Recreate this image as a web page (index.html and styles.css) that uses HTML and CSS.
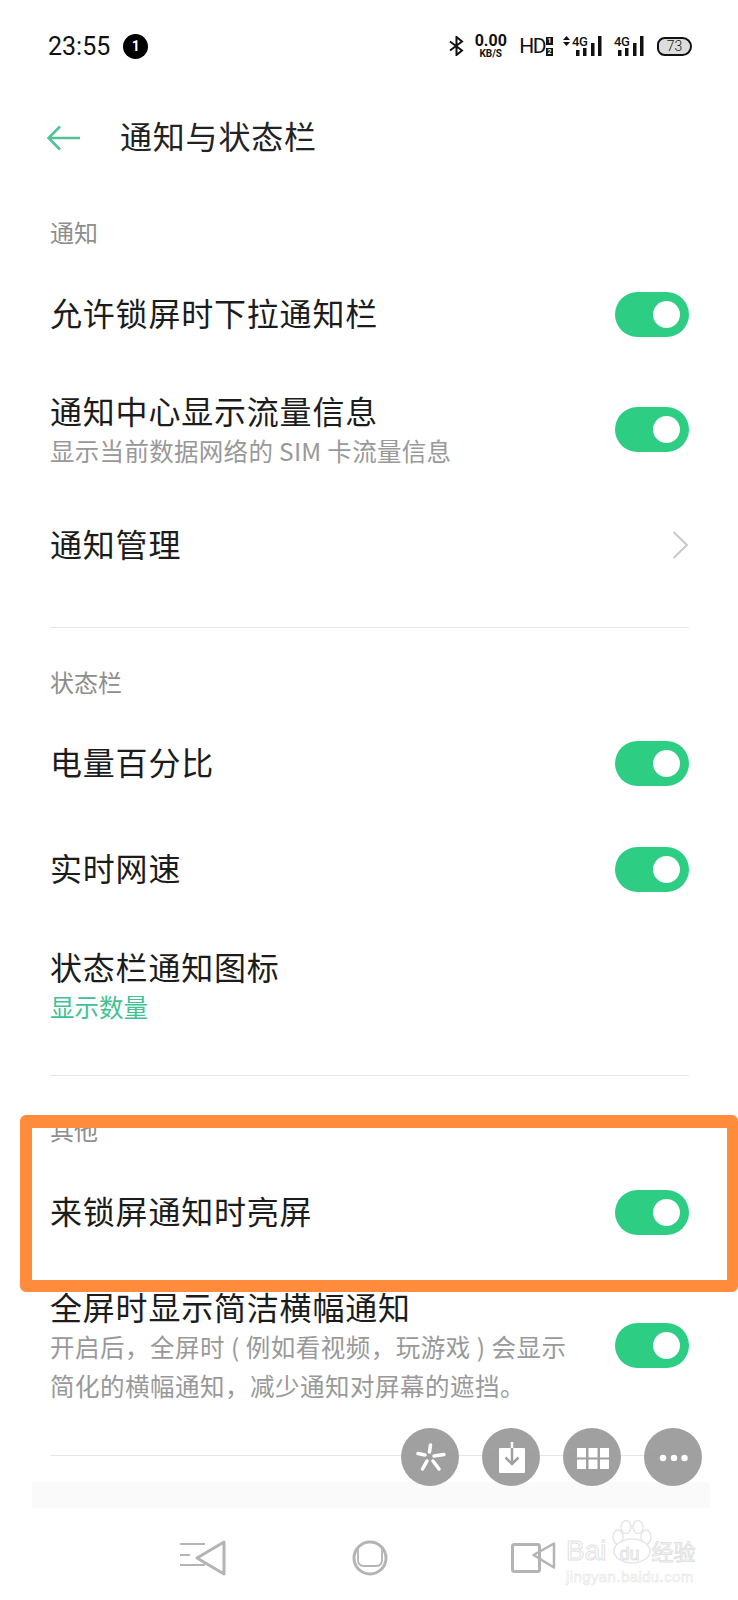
FILE: index.html
```html
<!DOCTYPE html>
<html lang="zh-CN">
<head>
    <meta charset="UTF-8">
    <title>通知与状态栏</title>
    <link rel="stylesheet" href="styles.css">
</head>
<body>
    <div class="screen">
        <div class="status-bar">
            <div class="status-left">
                <span class="time">23:55</span>
                <span class="badge">1</span>
            </div>
            <div class="status-right">
                <svg class="ic-bt" width="15" height="20" viewBox="0 0 15 20"><path d="M1 5.500 L13 14.500 L7.500 19 V1 L13 5.500 L1 14.500" fill="none" stroke="#111" stroke-width="2"/></svg>
                <div class="speed"><b>0.00</b><span>KB/S</span></div>
                <div class="hd">
                    <span class="hd-text">HD</span>
                    <div class="sim"><i>1</i><i>2</i></div>
                </div>
                <div class="signal first">
                    <svg class="updown" width="7" height="10" viewBox="0 0 7 10"><path d="M3.500 0 L7 4 H0 Z M3.500 10 L0 6 H7 Z" fill="#111"/></svg>
                    <span class="net">4G</span>
                    <svg class="bars" width="26" height="20" viewBox="0 0 26 20"><path d="M0 14h3.500v6H0zM7 12h3.500v8H7zM15 7h3.500v13H15zM22 0h3.500v20H22z" fill="#111"/></svg>
                </div>
                <div class="signal">
                    <span class="net">4G</span>
                    <svg class="bars" width="26" height="20" viewBox="0 0 26 20"><path d="M0 14h3.500v6H0zM7 12h3.500v8H7zM15 7h3.500v13H15zM22 0h3.500v20H22z" fill="#111"/></svg>
                </div>
                <div class="battery"><span>73</span></div>
            </div>
        </div>

        <div class="title-bar">
            <svg class="back" width="34" height="26" viewBox="0 0 34 26"><path d="M33 13 H2 M13 1.500 L1.500 13 L13 24.500" fill="none" stroke="#4fc394" stroke-width="2.600"/></svg>
            <h1>通知与状态栏</h1>
        </div>

        <div class="group first-group">
            <div class="section-label">通知</div>
            <div class="row">
                <div class="row-title">允许锁屏时下拉通知栏</div>
                <div class="toggle"></div>
            </div>
            <div class="row row-two">
                <div>
                    <div class="row-title">通知中心显示流量信息</div>
                    <div class="row-sub">显示当前数据网络的 SIM 卡流量信息</div>
                </div>
                <div class="toggle"></div>
            </div>
            <div class="row">
                <div class="row-title">通知管理</div>
                <svg width="17" height="28" viewBox="0 0 17 28"><path d="M1.500 1 L15 14 L1.500 27" fill="none" stroke="#c9c9c9" stroke-width="2"/></svg>
            </div>
        </div>

        <div class="group status-group">
            <div class="section-label">状态栏</div>
            <div class="row">
                <div class="row-title">电量百分比</div>
                <div class="toggle"></div>
            </div>
            <div class="row">
                <div class="row-title">实时网速</div>
                <div class="toggle"></div>
            </div>
            <div class="row row-two row-notify">
                <div>
                    <div class="row-title">状态栏通知图标</div>
                    <div class="row-sub row-value">显示数量</div>
                </div>
            </div>
        </div>

        <div class="group other-group">
            <div class="section-label">其他</div>
            <div class="row row-lock">
                <div class="row-title">来锁屏通知时亮屏</div>
                <div class="toggle"></div>
            </div>
            <div class="row row-two row-banner">
                <div>
                    <div class="row-title">全屏时显示简洁横幅通知</div>
                    <div class="row-sub row-sub-long">开启后，全屏时 ( 例如看视频，玩游戏 ) 会显示<br>简化的横幅通知，减少通知对屏幕的遮挡。</div>
                </div>
                <div class="toggle"></div>
            </div>
        </div>

        <div class="group group-end"></div>

        <div class="bottom-band"></div>

        <div class="nav-bar">
            <svg width="50" height="36" viewBox="0 0 50 36"><path d="M0 4h25M0 25h25M0 15h10" fill="none" stroke="#b4b4b4" stroke-width="1.800"/><path d="M17 18 L44 2 V34 Z" fill="none" stroke="#b4b4b4" stroke-width="3" stroke-linejoin="round"/></svg>
            <svg width="36" height="36" viewBox="0 0 36 36"><circle cx="18" cy="18" r="16" fill="none" stroke="#b4b4b4" stroke-width="3"/><path d="M6 7 V20 Q6 26 12 26 H24 Q30 26 30 20 V7" fill="none" stroke="#b4b4b4" stroke-width="1.800"/></svg>
            <svg width="48" height="36" viewBox="0 0 48 36"><rect x="2.500" y="4.500" width="27" height="27" rx="2" fill="none" stroke="#b4b4b4" stroke-width="3"/><path d="M23.500 15 L44 3.500 V27.500 Z" fill="none" stroke="#b4b4b4" stroke-width="2.500" stroke-linejoin="round"/></svg>
        </div>

        <div class="highlight"></div>

        <div class="float-tools">
            <div class="tool">
                <svg width="58" height="58" viewBox="0 0 58 58"><path d="M28.500 24 L29.500 17M33 28 L43 26.500M24 27 L17 25.500M26 33 L21.500 41M32 33 L38 41" fill="none" stroke="#fff" stroke-width="3.500" stroke-linecap="round"/></svg>
            </div>
            <div class="tool">
                <svg width="58" height="58" viewBox="0 0 58 58"><rect x="17" y="20" width="26" height="25" rx="1" fill="#fff"/><path d="M30 14 V20" stroke="#fff" stroke-width="2.500"/><path d="M30 20 V36 M23.500 29.500 L30 36 L36.500 29.500" fill="none" stroke="#a0a0a0" stroke-width="2.500"/></svg>
            </div>
            <div class="tool">
                <svg width="58" height="58" viewBox="0 0 58 58"><path d="M14 20h9v9.500h-9zM25.500 20h9v9.500h-9zM37 20h9v9.500h-9zM14 31.500h9V41h-9zM25.500 31.500h9V41h-9zM37 31.500h9V41h-9z" fill="#fff"/></svg>
            </div>
            <div class="tool">
                <svg width="58" height="58" viewBox="0 0 58 58"><circle cx="19" cy="30" r="3.200" fill="#fff"/><circle cx="30" cy="30" r="3.200" fill="#fff"/><circle cx="40.500" cy="30" r="3.200" fill="#fff"/></svg>
            </div>
        </div>

        <div class="watermark">
            <svg class="paw" width="40" height="44" viewBox="0 0 40 44"><g fill="#fff" stroke="#e6e6e6" stroke-width="1.500"><ellipse cx="6" cy="17" rx="5" ry="7"/><ellipse cx="14" cy="7" rx="5" ry="6.500"/><ellipse cx="26" cy="7" rx="5" ry="6.500"/><ellipse cx="34" cy="17" rx="5" ry="7"/><ellipse cx="20" cy="31" rx="18" ry="12"/></g></svg>
            <div class="wm-line">
                <span class="wm-bai">Bai</span><span class="wm-du">du</span><span class="wm-cn">经验</span>
            </div>
            <div class="wm-url">jingyan.baidu.com</div>
        </div>
    </div>
</body>
</html>
```

FILE: styles.css
```css
* {
    margin: 0;
    padding: 0;
    box-sizing: border-box;
}

body {
    font-family: "Noto Sans CJK SC", "Noto Sans", sans-serif;
    background-color: #ffffff;
    color: #1c1c1c;
}

.screen {
    position: relative;
    width: 738px;
    height: 1600px;
    overflow: hidden;
}

/* status bar */
.status-bar {
    height: 92px;
    padding: 0 46px 0 48px;
    display: flex;
    justify-content: space-between;
    align-items: center;
}

.status-left {
    display: flex;
    align-items: center;
    gap: 13px;
}

.time {
    font-family: Roboto, sans-serif;
    font-size: 25px;
    font-weight: 400;
    color: #111;
}

.badge {
    width: 25px;
    height: 25px;
    border-radius: 50%;
    background-color: #000;
    color: #fff;
    font-family: Roboto, sans-serif;
    font-size: 14px;
    font-weight: 700;
    display: flex;
    justify-content: center;
    align-items: center;
}

.status-right {
    display: flex;
    align-items: center;
    color: #111;
    font-family: Roboto, sans-serif;
}

.speed {
    margin-left: 10px;
    width: 33px;
    display: flex;
    flex-direction: column;
    align-items: center;
}

.speed b {
    font-size: 16px;
    line-height: 15px;
}

.speed span {
    font-size: 10px;
    font-weight: 700;
    line-height: 11px;
}

.hd {
    margin-left: 12px;
    display: flex;
    align-items: center;
    gap: 1px;
}

.hd-text {
    font-size: 21px;
    line-height: 1;
    font-weight: 400;
    letter-spacing: -1.500px;
}

.sim {
    display: flex;
    flex-direction: column;
    gap: 3px;
}

.sim i {
    width: 7px;
    height: 8px;
    background-color: #111;
    color: #fff;
    font-size: 7px;
    font-style: normal;
    font-weight: 700;
    line-height: 8px;
    text-align: center;
}

.signal {
    position: relative;
    width: 26px;
    height: 20px;
    margin-left: 16px;
}

.signal.first {
    margin-left: 23px;
}

.net {
    position: absolute;
    left: -4px;
    top: -1px;
    font-size: 13px;
    font-weight: 500;
    line-height: 1;
    letter-spacing: -0.500px;
}

.updown {
    position: absolute;
    left: -13px;
    top: 0;
}

.bars {
    display: block;
}

.battery {
    margin-left: 13px;
    width: 35px;
    height: 19px;
    border: 2px solid #111;
    border-radius: 8px 10px 10px 8px;
    background-color: #dddddd;
    display: flex;
    justify-content: center;
    align-items: center;
    font-size: 14px;
    font-weight: 300;
}

/* title */
.title-bar {
    height: 94px;
    padding-left: 47px;
    padding-bottom: 2px;
    display: flex;
    align-items: center;
}

.title-bar h1 {
    margin-left: 39px;
    padding-bottom: 6px;
    font-size: 32px;
    font-weight: 400;
    letter-spacing: 0.800px;
    color: #222;
}

/* list */
.group {
    margin: 0 49px 0 50px;
    padding-top: 30px;
    border-top: 1px solid #e6e6e6;
}

.first-group {
    padding-top: 22px;
    margin-bottom: 29px;
    border-top: none;
}

.status-group {
    margin-bottom: 25px;
}

.other-group {
    margin-bottom: 31px;
}

.group-end {
    padding-top: 0;
}

.section-label {
    height: 52px;
    line-height: 48px;
    font-size: 24px;
    color: #8e8e8e;
}

.first-group .section-label {
    height: 53px;
}

.row {
    min-height: 106px;
    display: flex;
    justify-content: space-between;
    align-items: center;
}

.row-two {
    min-height: 125px;
}

.row-notify {
    min-height: 128px;
}

.row-lock {
    min-height: 108px;
}

.row-banner {
    min-height: 158px;
}

.row-title {
    font-size: 32px;
    line-height: 41px;
    letter-spacing: 0.800px;
    color: #1c1c1c;
}

.row > .row-title {
    padding-bottom: 3px;
}

.row-sub {
    font-size: 24.500px;
    line-height: 39px;
    letter-spacing: 0.300px;
    color: #999999;
}

.row-value {
    letter-spacing: 0;
    color: #3fc293;
}

.row-sub-long {
    letter-spacing: 0.500px;
}

.toggle {
    position: relative;
    flex-shrink: 0;
    width: 74px;
    height: 45px;
    border-radius: 23px;
    background-color: #2dcd84;
}

.toggle::after {
    content: "";
    position: absolute;
    right: 9px;
    top: 9px;
    width: 27px;
    height: 27px;
    border-radius: 50%;
    background-color: #ffffff;
}

/* bottom */
.bottom-band {
    position: absolute;
    left: 32px;
    top: 1482px;
    width: 678px;
    height: 26px;
    background-color: #fafafa;
}

.nav-bar {
    position: absolute;
    left: 180px;
    top: 1540px;
    width: 378px;
    display: flex;
    justify-content: space-between;
}

.highlight {
    position: absolute;
    left: 20px;
    top: 1115px;
    width: 718px;
    height: 177px;
    border: solid #ff8c3c;
    border-width: 13px 11px 12px 12px;
    border-radius: 6px;
}

.float-tools {
    position: absolute;
    left: 401px;
    top: 1428px;
    display: flex;
    gap: 23px;
}

.tool {
    width: 58px;
    height: 58px;
    border-radius: 50%;
    background-color: rgba(150, 150, 150, 0.9);
}

.tool svg {
    display: block;
}

/* baidu watermark */
.watermark {
    position: absolute;
    left: 566px;
    top: 1520px;
    width: 136px;
    height: 64px;
    font-family: "Liberation Sans", sans-serif;
    color: #ffffff;
}

.paw {
    position: absolute;
    left: 46px;
    top: 0;
}

.wm-line {
    position: absolute;
    left: 0;
    top: 17px;
    display: flex;
    align-items: baseline;
    -webkit-text-stroke: 1px #e2e2e2;
    line-height: 1;
}

.wm-bai {
    font-size: 28px;
}

.wm-du {
    margin-left: 13px;
    font-size: 18px;
}

.wm-cn {
    margin-left: 12px;
    font-family: "Noto Sans CJK SC", sans-serif;
    font-size: 22px;
}

.wm-url {
    position: absolute;
    left: 0;
    top: 48px;
    font-size: 15px;
    letter-spacing: 0.400px;
    -webkit-text-stroke: 0.600px #e6e6e6;
}
```
